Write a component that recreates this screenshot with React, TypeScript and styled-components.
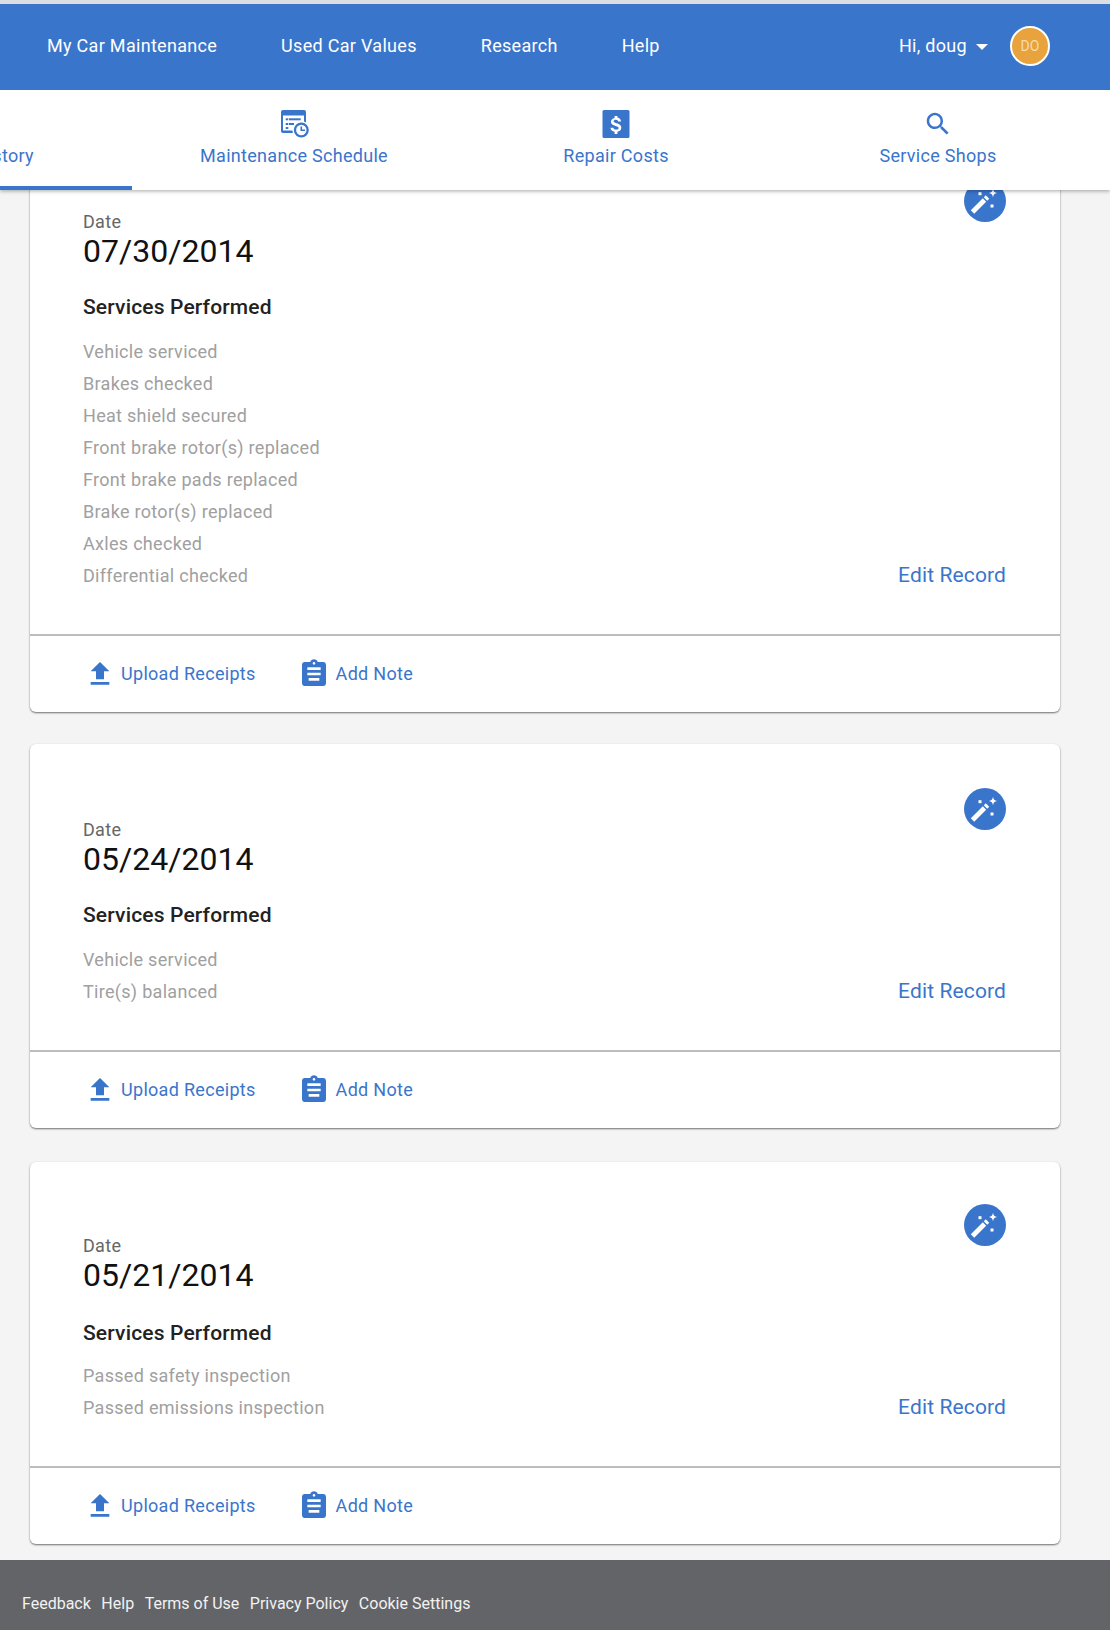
import React from "react";
import styled, { createGlobalStyle } from "styled-components";

const BLUE = "#3a75cc";

const Global = createGlobalStyle`
  html, body { margin: 0; padding: 0; background: #f4f4f4; }
  body { font-family: Roboto, "Liberation Sans", sans-serif; }
  * { box-sizing: border-box; }
`;

const Page = styled.div`
  width: 1110px;
  height: 1630px;
  overflow: hidden;
  position: relative;
  display: flex;
  flex-direction: column;
`;

const TopChrome = styled.header`
  position: absolute;
  top: 0;
  left: 0;
  right: 0;
  z-index: 5;
  box-shadow: 0 1px 4px rgba(0, 0, 0, 0.35);
`;

const Strip = styled.div`
  height: 4px;
  background: #dcdfe2;
`;

const NavBar = styled.nav`
  height: 86px;
  background: ${BLUE};
  display: flex;
  align-items: center;
  justify-content: space-between;
  padding: 0 60px 3px 47px;
`;

const NavLinks = styled.div`
  display: flex;
  gap: 64px;
`;

const NavLink = styled.span`
  font-size: 18px;
  letter-spacing: 0.3px;
  color: #fff;
`;

const UserArea = styled.div`
  display: flex;
  align-items: center;
  gap: 8px;
  font-size: 18px;
  letter-spacing: 0.3px;
  color: #fff;
`;

const Caret = styled.span`
  width: 0;
  height: 0;
  margin: 2px 14px 0 1px;
  border-left: 6px solid transparent;
  border-right: 6px solid transparent;
  border-top: 6px solid #fff;
`;

const Avatar = styled.span`
  width: 40px;
  height: 40px;
  border-radius: 50%;
  border: 2px solid #fff;
  background: #e8a33d;
  color: #f6dcae;
  font-size: 14px;
  letter-spacing: 0;
  display: flex;
  align-items: center;
  justify-content: center;
`;

const TabBar = styled.div`
  height: 100px;
  background: #fff;
  display: flex;
  margin-left: -189px;
  width: 1299px;
`;

const Tab = styled.div<{ $active?: boolean }>`
  width: ${(p) => (p.$active ? 321 : 322)}px;
  margin-right: ${(p) => (p.$active ? 1 : 0)}px;
  flex: none;
  display: flex;
  flex-direction: column;
  align-items: center;
  padding-top: 19px;
  gap: 5px;
  color: ${BLUE};
  font-size: 18px;
  letter-spacing: 0.3px;
  line-height: 24px;
  border-bottom: 4px solid ${(p) => (p.$active ? BLUE : "transparent")};
`;

const TabIcon = styled.svg`
  width: 30px;
  height: 30px;
  fill: ${BLUE};
`;

const Main = styled.main`
  flex: 1;
  padding: 136px 50px 0 30px;
  display: flex;
  flex-direction: column;
`;

const Card = styled.section<{ $gap: number }>`
  background: #fff;
  border-radius: 6px;
  margin-bottom: ${(p) => p.$gap}px;
  box-shadow: 0 1px 2px rgba(0, 0, 0, 0.55);
`;

const CardBody = styled.div<{ $height: number; $top: number }>`
  height: ${(p) => p.$height}px;
  padding: ${(p) => p.$top}px 54px 0 53px;
  display: flex;
  justify-content: space-between;
  border-bottom: 2px solid #bdbdbd;
`;

const Details = styled.div`
  display: flex;
  flex-direction: column;
`;

const DateLabel = styled.div`
  font-size: 18px;
  line-height: 21px;
  letter-spacing: 0.3px;
  color: #666;
  margin-top: 31px;
`;

const DateValue = styled.div`
  font-size: 32px;
  line-height: 38px;
  letter-spacing: 0.03px;
  color: #111;
`;

const ServicesTitle = styled.h3<{ $top: number; $bottom: number }>`
  margin: ${(p) => p.$top}px 0 ${(p) => p.$bottom}px;
  font-size: 21px;
  letter-spacing: 0.16px;
  line-height: 28px;
  font-weight: 500;
  color: #222;
`;

const ServiceList = styled.ul`
  list-style: none;
  margin: 0;
  padding: 0;
`;

const ServiceItem = styled.li`
  font-size: 18px;
  letter-spacing: 0.3px;
  line-height: 32px;
  color: #a0a0a0;
`;

const Side = styled.div`
  display: flex;
  flex-direction: column;
  align-items: flex-end;
  justify-content: space-between;
  padding-bottom: 47px;
`;

const WandButton = styled.span`
  width: 42px;
  height: 42px;
  border-radius: 50%;
  background: ${BLUE};
  display: flex;
`;

const EditLink = styled.span`
  font-size: 21px;
  letter-spacing: 0.12px;
  line-height: 24px;
  color: ${BLUE};
`;

const CardFooter = styled.div`
  height: 76px;
  display: flex;
  align-items: center;
  padding-left: 54px;
  gap: 42px;
`;

const Action = styled.span<{ $gap: number }>`
  display: flex;
  align-items: center;
  gap: ${(p) => p.$gap}px;
  color: ${BLUE};
  font-size: 18px;
  letter-spacing: 0.3px;
`;

const ActionLabel = styled.span`
  padding-bottom: 2px;
`;

const ActionIcon = styled.svg`
  width: 32px;
  height: 32px;
  fill: ${BLUE};
`;

const Footer = styled.footer`
  position: absolute;
  left: 0;
  right: 0;
  bottom: 0;
  height: 70px;
  background: #636468;
  display: flex;
  align-items: center;
  gap: 10.5px;
  padding: 16px 0 0 22px;
`;

const FooterLink = styled.span`
  font-size: 16px;
  color: #f2f2f2;
`;

const Wand = () => (
  <svg width="42" height="42" viewBox="-21 -21 42 42" fill="#fff">
    <polygon points="-14.2,9.3 -2.2,-2.7 1.2,0.7 -10.800,12.700" />
    <polygon points="-1.2,-3.7 0.8,-5.700 4.2,-2.300 2.2,-0.300" />
    <path d="M8-12.200c.5 2.800 1.400 3.700 4.200 4.200-2.800.5-3.700 1.400-4.200 4.200-.5-2.800-1.400-3.700-4.200-4.200 2.800-.5 3.700-1.400 4.200-4.200z" />
    <rect x="-6.500" y="-8.800" width="3" height="3" />
    <rect x="5.500" y="3.500" width="3" height="3" />
  </svg>
);

const Upload = () => (
  <ActionIcon viewBox="0 0 24 24">
    <path d="M9 16h6v-6h4l-7-7-7 7h4v6zm-4 2h14v2H5v-2z" />
  </ActionIcon>
);

const Note = () => (
  <ActionIcon viewBox="0 0 24 24">
    <path d="M19 3h-4.180C14.400 1.840 13.300 1 12 1c-1.300 0-2.400.84-2.820 2H5c-1.100 0-2 .9-2 2v14c0 1.100.9 2 2 2h14c1.100 0 2-.9 2-2V5c0-1.100-.9-2-2-2zm-7 0c.55 0 1 .45 1 1s-.45 1-1 1-1-.45-1-1 .45-1 1-1zm4 14H8v-2h8v2zm1-4H7v-2h10v2zm0-4H7V7h10v2z" />
  </ActionIcon>
);

const ScheduleIcon = () => (
  <TabIcon viewBox="0 0 30 30">
    <rect x="2" y="1" width="25" height="23" rx="2" />
    <rect x="4" y="6.500" width="21" height="15" fill="#fff" />
    <rect x="6.700" y="9.300" width="2.600" height="2" />
    <rect x="10" y="9.300" width="11.700" height="2" />
    <rect x="6.700" y="14" width="2.600" height="2" />
    <rect x="10" y="14" width="5" height="2" />
    <rect x="6.700" y="18" width="2.600" height="2" />
    <circle cx="22.300" cy="21" r="9" fill="#fff" />
    <circle cx="22.300" cy="21" r="7.500" />
    <circle cx="22.300" cy="21" r="5.200" fill="#fff" />
    <path d="M21.500 17.500h1.600v3h2.900v1.600h-4.500z" />
  </TabIcon>
);

const DollarIcon = () => (
  <TabIcon viewBox="0 0 30 30">
    <path
      fillRule="evenodd"
      d="M3 1h24a1.500 1.500 0 0 1 1.500 1.500v25A1.500 1.500 0 0 1 27 29H3a1.500 1.500 0 0 1-1.500-1.500v-25A1.500 1.500 0 0 1 3 1zm10.600 6v1.900c-2.200.5-3.700 1.900-3.700 3.900 0 2.400 2 3.400 4.700 4.100 2.300.6 3 1.200 3 2.100 0 .9-.8 1.600-2.500 1.600-1.800 0-2.600-.8-2.700-1.900H9.500c.1 2.300 1.800 3.500 4.100 4V25h2.800v-2.300c2.200-.4 3.900-1.700 3.900-3.900 0-2.900-2.500-3.900-4.700-4.500-2.300-.6-3-1.100-3-2 0-.9.800-1.500 2.300-1.500 1.500 0 2.100.7 2.200 1.700h2.900c-.1-1.800-1.200-3.300-3.600-3.900V7z"
    />
  </TabIcon>
);

const SearchIcon = () => (
  <TabIcon viewBox="0 0 24 24">
    <path d="M15.500 14h-.79l-.28-.27C15.410 12.590 16 11.110 16 9.500 16 5.910 13.090 3 9.500 3S3 5.910 3 9.500 5.910 16 9.500 16c1.610 0 3.090-.59 4.230-1.570l.27.28v.79l5 4.990L20.490 19l-4.990-5zm-6 0C7.010 14 5 11.990 5 9.500S7.010 5 9.500 5 14 7.010 14 9.500 11.990 14 9.500 14z" />
  </TabIcon>
);

type Rec = {
  date: string;
  services: string[];
  height: number;
  gap: number;
  top: number;
  titleTop: number;
  titleBottom: number;
};

const records: Rec[] = [
  {
    date: "07/30/2014",
    services: [
      "Vehicle serviced",
      "Brakes checked",
      "Heat shield secured",
      "Front brake rotor(s) replaced",
      "Front brake pads replaced",
      "Brake rotor(s) replaced",
      "Axles checked",
      "Differential checked",
    ],
    height: 500,
    gap: 32,
    top: 44,
    titleTop: 23,
    titleBottom: 15,
  },
  {
    date: "05/24/2014",
    services: ["Vehicle serviced", "Tire(s) balanced"],
    height: 308,
    gap: 34,
    top: 44,
    titleTop: 23,
    titleBottom: 15,
  },
  {
    date: "05/21/2014",
    services: ["Passed safety inspection", "Passed emissions inspection"],
    height: 306,
    gap: 0,
    top: 42,
    titleTop: 25,
    titleBottom: 13,
  },
];

export default function App() {
  return (
    <Page>
      <Global />
      <TopChrome>
        <Strip />
        <NavBar>
          <NavLinks>
            <NavLink>My Car Maintenance</NavLink>
            <NavLink>Used Car Values</NavLink>
            <NavLink>Research</NavLink>
            <NavLink>Help</NavLink>
          </NavLinks>
          <UserArea>
            Hi, doug
            <Caret />
            <Avatar>DO</Avatar>
          </UserArea>
        </NavBar>
        <TabBar>
          <Tab $active>
            <TabIcon viewBox="0 0 24 24" />
            Service History
          </Tab>
          <Tab>
            <ScheduleIcon />
            Maintenance Schedule
          </Tab>
          <Tab>
            <DollarIcon />
            Repair Costs
          </Tab>
          <Tab>
            <SearchIcon />
            Service Shops
          </Tab>
        </TabBar>
      </TopChrome>
      <Main>
        {records.map((r) => (
          <Card key={r.date} $gap={r.gap}>
            <CardBody $height={r.height} $top={r.top}>
              <Details>
                <DateLabel>Date</DateLabel>
                <DateValue>{r.date}</DateValue>
                <ServicesTitle $top={r.titleTop} $bottom={r.titleBottom}>
                  Services Performed
                </ServicesTitle>
                <ServiceList>
                  {r.services.map((s) => (
                    <ServiceItem key={s}>{s}</ServiceItem>
                  ))}
                </ServiceList>
              </Details>
              <Side>
                <WandButton>
                  <Wand />
                </WandButton>
                <EditLink>Edit Record</EditLink>
              </Side>
            </CardBody>
            <CardFooter>
              <Action $gap={5}>
                <Upload />
                <ActionLabel>Upload Receipts</ActionLabel>
              </Action>
              <Action $gap={6}>
                <Note />
                <ActionLabel>Add Note</ActionLabel>
              </Action>
            </CardFooter>
          </Card>
        ))}
      </Main>
      <Footer>
        <FooterLink>Feedback</FooterLink>
        <FooterLink>Help</FooterLink>
        <FooterLink>Terms of Use</FooterLink>
        <FooterLink>Privacy Policy</FooterLink>
        <FooterLink>Cookie Settings</FooterLink>
      </Footer>
    </Page>
  );
}
